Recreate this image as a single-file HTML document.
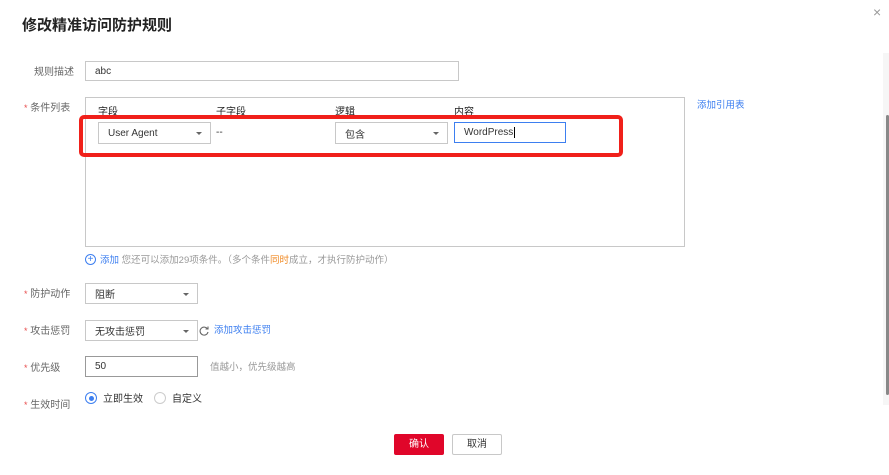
<!DOCTYPE html>
<html><head><meta charset="utf-8"><style>
*{box-sizing:border-box;margin:0;padding:0}
body{width:889px;height:475px;background:#fff;position:relative;overflow:hidden;font-family:"Liberation Sans","Noto Sans CJK SC",sans-serif;font-size:10px;color:#333}
.a{position:absolute;white-space:nowrap}
.lbl{color:#666;font-size:10px}
.star{color:#e84d4d;font-size:9px}
.box{position:absolute;border:1px solid #c8c8c8;background:#fff;font-size:10px;padding-left:9px;display:flex;align-items:center;color:#333}
.caret{position:absolute;right:8px;top:50%;margin-top:-1px;width:0;height:0;border-left:3px solid transparent;border-right:3px solid transparent;border-top:3px solid #666}
.blue{color:#3d7ff0}
</style></head><body>
<div class="a" style="left:22px;top:14px;font-size:15px;font-weight:bold;color:#222">修改精准访问防护规则</div>
<div class="a" style="left:873px;top:4px;font-size:14px;color:#999">×</div>
<div class="a" style="left:883px;top:53px;width:6px;height:352px;background:#f6f6f6"></div>
<div class="a" style="left:886px;top:115px;width:3px;height:280px;background:#888;border-radius:2px"></div>

<div class="a lbl" style="left:34px;top:63px">规则描述</div>
<div class="box" style="left:85px;top:61px;width:374px;height:20px">abc</div>

<div class="a lbl" style="left:24px;top:99px"><span class="star">*</span> 条件列表</div>
<div class="a" style="left:85px;top:97px;width:600px;height:150px;border:1px solid #c8c8c8"></div>
<div class="a" style="left:98px;top:103px;font-size:10px;color:#222">字段</div>
<div class="a" style="left:216px;top:103px;font-size:10px;color:#222">子字段</div>
<div class="a" style="left:335px;top:103px;font-size:10px;color:#222">逻辑</div>
<div class="a" style="left:454px;top:103px;font-size:10px;color:#222">内容</div>
<div class="box" style="left:98px;top:122px;width:113px;height:22px">User Agent<span class="caret"></span></div>
<div class="a" style="left:216px;top:127px">--</div>
<div class="box" style="left:335px;top:122px;width:113px;height:22px">包含<span class="caret"></span></div>
<div class="box" style="left:454px;top:122px;width:112px;height:21px;border-color:#3d7ff0">WordPress<span style="border-left:1px solid #000;height:11px;margin-left:1px"></span></div>
<div class="a" style="left:79px;top:115px;width:544px;height:42px;border:4px solid #f0201a;border-radius:5px"></div>
<div class="a blue" style="left:697px;top:97px;font-size:9.5px">添加引用表</div>

<div class="a" style="left:85px;top:254px;width:11px;height:11px;border:1px solid #3d7ff0;border-radius:50%;color:#3d7ff0;font-size:10px;line-height:9px;text-align:center">+</div>
<div class="a" style="left:100px;top:252px;font-size:9.5px;color:#999"><span class="blue">添加</span> 您还可以添加29项条件。（多个条件<span style="color:#f08a24">同时</span>成立，才执行防护动作）</div>

<div class="a lbl" style="left:24px;top:285px"><span class="star">*</span> 防护动作</div>
<div class="box" style="left:85px;top:283px;width:113px;height:21px">阻断<span class="caret"></span></div>

<div class="a lbl" style="left:24px;top:322px"><span class="star">*</span> 攻击惩罚</div>
<div class="box" style="left:85px;top:320px;width:113px;height:21px">无攻击惩罚<span class="caret"></span></div>
<svg class="a" style="left:199px;top:326px" width="10" height="10" viewBox="0 0 10 10"><path d="M8.5 3A4 4 0 1 0 9 6" fill="none" stroke="#666" stroke-width="1.1"/><path d="M6.5 3H9V0.5" fill="none" stroke="#666" stroke-width="1.1"/></svg>
<div class="a blue" style="left:214px;top:322px;font-size:9.5px">添加攻击惩罚</div>

<div class="a lbl" style="left:24px;top:359px"><span class="star">*</span> 优先级</div>
<div class="box" style="left:85px;top:356px;width:113px;height:21px;border-color:#999">50</div>
<div class="a" style="left:210px;top:359px;font-size:9.5px;color:#999">值越小，优先级越高</div>

<div class="a lbl" style="left:24px;top:396px"><span class="star">*</span> 生效时间</div>
<div class="a" style="left:85px;top:392px;width:12px;height:12px;border:1px solid #3d7ff0;border-radius:50%"></div>
<div class="a" style="left:88.5px;top:395.5px;width:5px;height:5px;background:#3d7ff0;border-radius:50%"></div>
<div class="a" style="left:103px;top:390px">立即生效</div>
<div class="a" style="left:154px;top:392px;width:12px;height:12px;border:1px solid #ccc;border-radius:50%"></div>
<div class="a" style="left:172px;top:390px">自定义</div>

<div class="a" style="left:394px;top:434px;width:50px;height:21px;background:#e0062a;border-radius:2px;color:#fff;text-align:center;line-height:21px;font-size:10px">确认</div>
<div class="a" style="left:452px;top:434px;width:50px;height:21px;border:1px solid #c8c8c8;border-radius:2px;color:#333;text-align:center;line-height:19px;font-size:10px">取消</div>
</body></html>
